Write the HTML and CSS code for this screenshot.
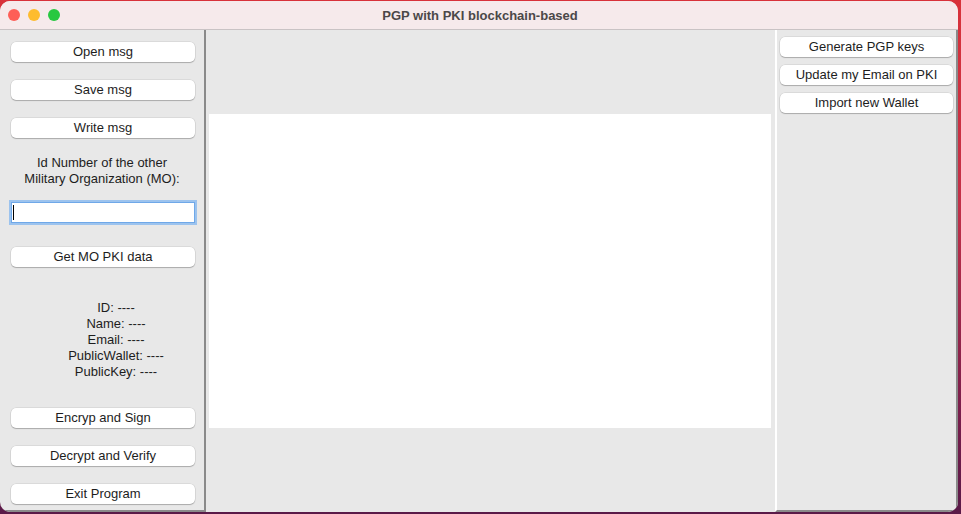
FILE: index.html
```html
<!DOCTYPE html>
<html>
<head>
<meta charset="utf-8">
<link rel="stylesheet" href="styles.css">
</head>
<body>
<div class="window">
  <div class="titlebar">
    <div class="lights">
      <span class="light red"></span>
      <span class="light yellow"></span>
      <span class="light green"></span>
    </div>
    <div class="title">PGP with PKI blockchain-based</div>
  </div>
  <div class="content">
    <div class="left">
      <button class="btn">Open msg</button>
      <button class="btn gap">Save msg</button>
      <button class="btn gap">Write msg</button>
      <div class="label">Id Number of the other<br>Military Organization (MO):</div>
      <div class="fieldwrap">
        <input class="field" type="text">
        <span class="caret"></span>
      </div>
      <button class="btn getmo">Get MO PKI data</button>
      <div class="info">
        <div>ID: ----</div>
        <div>Name: ----</div>
        <div>Email: ----</div>
        <div>PublicWallet: ----</div>
        <div>PublicKey: ----</div>
      </div>
      <button class="btn enc">Encryp and Sign</button>
      <button class="btn gap">Decrypt and Verify</button>
      <button class="btn gap">Exit Program</button>
    </div>
    <div class="middle">
      <div class="textarea"></div>
    </div>
    <div class="right">
      <button class="btn rbtn">Generate PGP keys</button>
      <button class="btn rbtn">Update my Email on PKI</button>
      <button class="btn rbtn">Import new Wallet</button>
    </div>
  </div>
</div>
</body>
</html>
```
FILE: styles.css
```css
html, body {
  margin: 0;
  padding: 0;
  width: 961px;
  height: 514px;
  overflow: hidden;
}
body {
  background: linear-gradient(180deg, #d8323a 0%, #c23048 40%, #7a1e4c 80%, #5a1a48 100%);
  font-family: "Liberation Sans", Arial, sans-serif;
  font-size: 13px;
  color: #1d1d1d;
}
.window {
  margin-top: 1px;
  width: 958px;
  height: 511px;
  border-radius: 10px;
  overflow: hidden;
  background: #e8e8e8;
  display: flex;
  flex-direction: column;
}
.titlebar {
  height: 28px;
  flex: none;
  background: #f6eaeb;
  border-bottom: 1px solid #c9c3c4;
  display: flex;
  align-items: center;
  position: relative;
}
.lights {
  display: flex;
  gap: 8px;
  padding-left: 8px;
}
.light {
  width: 12px;
  height: 12px;
  border-radius: 50%;
  display: block;
}
.red { background: #fe5f57; }
.yellow { background: #febc2e; }
.green { background: #28c840; }
.title {
  position: absolute;
  left: 0;
  right: 0;
  top: 0;
  line-height: 29px;
  text-align: center;
  font-weight: bold;
  color: #4b4848;
  padding-left: 2px;
}
.content {
  flex: 1;
  display: flex;
  min-height: 0;
}
.left {
  width: 206px;
  flex: none;
  border-right: 2px solid #8a8a8a;
  border-bottom: 2px solid #8a8a8a;
  display: flex;
  flex-direction: column;
  align-items: flex-start;
  padding-top: 12px;
  box-sizing: border-box;
}
.btn {
  font-family: "Liberation Sans", Arial, sans-serif;
  font-size: 13px;
  color: #1d1d1d;
  background: #ffffff;
  border: none;
  border-radius: 5px;
  box-shadow: 0 0 0 0.5px rgba(0,0,0,0.12), 0 1px 1px rgba(0,0,0,0.22);
  height: 20px;
  padding: 0;
  margin: 0;
  line-height: 20px;
  display: block;
}
.left .btn {
  width: 184px;
  margin-left: 11px;
}
.left .btn.gap {
  margin-top: 18px;
}
.label {
  margin-top: 16px;
  width: 204px;
  text-align: center;
  line-height: 16px;
  padding-top: 1px;
}
.fieldwrap {
  margin: 15px 0 0 11px;
  position: relative;
}
.field {
  display: block;
  width: 184px;
  height: 21px;
  box-sizing: border-box;
  border: 1px solid #6fa8e8;
  outline: 2px solid #9cc3ee;
  outline-offset: 0;
  background: #fff;
  padding: 0 2px;
  font-size: 13px;
  font-family: "Liberation Sans", Arial, sans-serif;
  border-radius: 0;
}
.caret {
  position: absolute;
  left: 2px;
  top: 3px;
  width: 1px;
  height: 15px;
  background: #000;
}
.left .btn.getmo {
  margin-top: 24px;
}
.info {
  margin-top: 33px;
  width: 204px;
  padding-left: 28px;
  box-sizing: border-box;
  text-align: center;
  line-height: 16px;
}
.left .btn.enc {
  margin-top: 28px;
}
.middle {
  flex: 1;
  display: flex;
  flex-direction: column;
  padding: 84px 4px 0 3px;
}
.textarea {
  height: 314px;
  background: #ffffff;
}
.right {
  border-left: 2px solid #ffffff;
  border-right: 2px solid #8a8a8a;
  border-bottom: 2px solid #8a8a8a;
  box-sizing: border-box;
  width: 183px;
  flex: none;
  display: flex;
  flex-direction: column;
  gap: 8px;
  padding: 7px 0 0 3px;
}
.rbtn {
  width: 173px;
}
```
